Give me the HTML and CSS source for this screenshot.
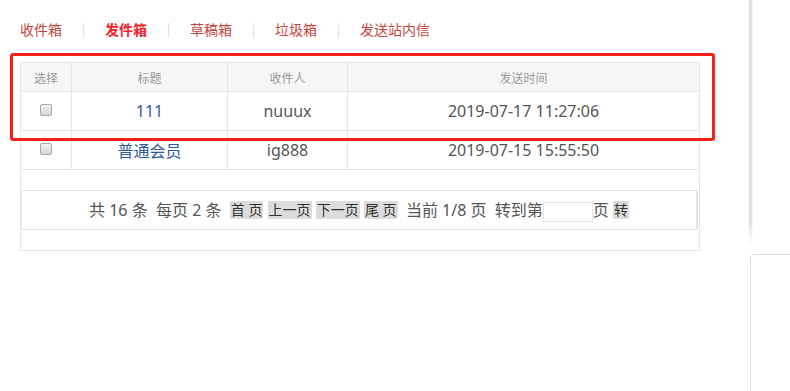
FILE: index.html
```html
<!DOCTYPE html>
<html lang="zh-CN">

<head>
    <meta charset="utf-8">
    <meta name="viewport" content="width=device-width, initial-scale=1.0">
    <title>发件箱</title>
    <link rel="stylesheet" href="styles.css">
</head>

<body>
    <div class="page">
        <main class="main">
            <nav class="tabs">
                <a class="tab">收件箱</a><span class="sep">|</span>
                <a class="tab valgt">发件箱</a><span class="sep">|</span>
                <a class="tab">草稿箱</a><span class="sep">|</span>
                <a class="tab">垃圾箱</a><span class="sep">|</span>
                <a class="tab">发送站内信</a>
            </nav>

            <section class="list">
                <div class="row head">
                    <div class="cell">选择</div>
                    <div class="cell">标题</div>
                    <div class="cell">收件人</div>
                    <div class="cell">发送时间</div>
                </div>
                <div class="row">
                    <div class="cell"><input type="checkbox" class="check"></div>
                    <div class="cell titel">111</div>
                    <div class="cell">nuuux</div>
                    <div class="cell">2019-07-17 11:27:06</div>
                </div>
                <div class="row">
                    <div class="cell"><input type="checkbox" class="check"></div>
                    <div class="cell titel">普通会员</div>
                    <div class="cell">ig888</div>
                    <div class="cell">2019-07-15 15:55:50</div>
                </div>

                <div class="pager">
                    共 16 条&nbsp; 每页 2 条&nbsp; <span class="btn">首 页</span> <span class="btn">上一页</span> <span class="btn">下一页</span> <span class="btn">尾 页</span>&nbsp; 当前 1/8 页&nbsp; 转到第<input type="text" class="goto">页 <span class="btn">转</span>
                </div>
            </section>
        </main>

        <aside class="side">
            <div class="strip"></div>
            <div class="panel"></div>
        </aside>
    </div>

    <!-- markering af den valgte række -->
    <div class="mark"></div>
</body>

</html>
```

FILE: styles.css
```css
body {
    margin: 0;
    background-color: white;
    font-family: "Noto Sans", "Open Sans", "Noto Sans CJK SC", sans-serif;
    color: #555;
}

.page {
    display: flex;
    height: 391px;
}

.main {
    width: 748px;
}

/***************faner**************/
.tabs {
    display: flex;
    padding: 20px 0 0 20px;
    height: 18px;
    line-height: 18px;
    font-family: "Noto Sans CJK SC", sans-serif;
    font-size: 14px;
}

.tab {
    color: #c4463d;
}

.tab.valgt {
    color: #f2242b;
    font-weight: bold;
}

.sep {
    width: 43px;
    text-align: center;
    color: #d8d8d8;
    font-size: 13px;
}

/***************liste**************/
.list {
    width: 680px;
    margin: 24px 0 0 20px;
    border: 1px solid #e5e5e5;
    box-sizing: border-box;
}

.row {
    display: grid;
    grid-template-columns: 51px 156px 120px 1fr;
    height: 39px;
    border-bottom: 1px solid #e5e5e5;
    box-sizing: border-box;
    font-size: 16px;
}

.row.head {
    height: 29px;
    background-color: #f6f6f6;
    font-family: "Noto Sans CJK SC", sans-serif;
    font-size: 12px;
    color: #999;
}

.cell {
    display: flex;
    align-items: center;
    justify-content: center;
    border-right: 1px solid #e5e5e5;
}

.cell:last-child {
    border-right: none;
}

.titel {
    color: #2f5c9e;
}

.check {
    appearance: none;
    width: 12px;
    height: 12px;
    margin: 0 0 2px 0;
    border: 1px solid #a8a8a8;
    border-radius: 2px;
    background: linear-gradient(#f2f2f2, #d6d6d6);
}

/***************sider**************/
.pager {
    margin: 20px 1px 20px 0;
    height: 40px;
    line-height: 38px;
    border: 1px solid #e5e5e5;
    border-right-width: 2px;
    box-sizing: border-box;
    text-align: center;
    font-size: 16px;
    color: #555;
    font-family: "Noto Sans", "Noto Sans CJK SC", sans-serif;
}

.btn {
    display: inline-block;
    line-height: 18px;
    padding: 0 1px;
    background-color: #dcdcdc;
    font-size: 14px;
    color: #333;
    vertical-align: 1px;
}

.goto {
    width: 50px;
    height: 20px;
    margin: 0;
    padding: 0;
    border: 1px solid #e3e3e3;
    box-sizing: border-box;
    vertical-align: middle;
}

/***************højre side**************/
.side {
    flex: 1;
    display: flex;
    flex-direction: column;
}

.strip {
    width: 5px;
    height: 245px;
    background: linear-gradient(to right, #fff, #d4d4d4, #fff);
    -webkit-mask-image: linear-gradient(to bottom, black 90%, transparent);
}

.panel {
    flex: 1;
    margin: 9px 0 0 2px;
    border-top: 1px solid #dedede;
    border-left: 1px solid #dedede;
    border-top-left-radius: 5px;
}

/***************markering**************/
.mark {
    position: absolute;
    left: 10px;
    top: 53px;
    width: 705px;
    height: 88px;
    border: 3px solid #f5221c;
    border-radius: 3px;
    box-sizing: border-box;
}
```
